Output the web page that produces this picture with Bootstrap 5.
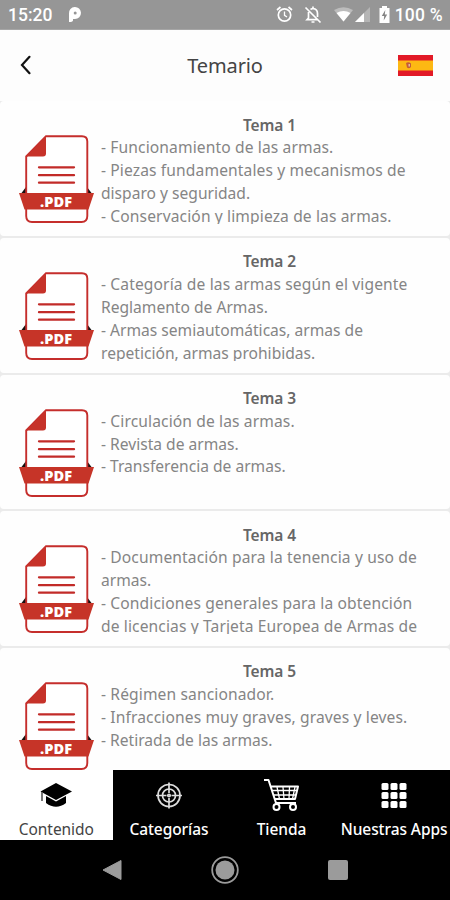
<!DOCTYPE html>
<html lang="es">
<head>
<meta charset="utf-8">
<meta name="viewport" content="width=device-width, initial-scale=1">
<title>Temario</title>
<link href="https://cdn.jsdelivr.net/npm/bootstrap@5.3.0/dist/css/bootstrap.min.css" rel="stylesheet">
<style>
body{font-family:"Noto Sans","Open Sans",sans-serif;background:#fdfdfd}
.screen{width:450px;height:900px}
.status{height:30px;background:#969696;color:#fff;font:500 17.5px Roboto,sans-serif;border-bottom:1px solid #a6a6a6}
.status svg,.topbar svg,.tab svg,.softkeys svg{display:block;flex:none}
.status-time{margin-left:8px}
.status-charge{margin:0 7px 0 5px;letter-spacing:.25px}
.topbar{height:71.3px;display:grid;grid-template-columns:80px 1fr 80px;padding:1px 17px 0}
.topbar svg{margin-top:-2px}
.topbar h1{font-size:20px;font-weight:400;color:#444;letter-spacing:-.1px}
.topics{height:668.7px;background:#ebebeb}
.topic{height:134.65px;margin-bottom:2px;padding:12.4px 14px 0 19px;background:#fefefe;border-radius:4px;flex:none}
.pdf-icon{width:75px;height:90px;margin:21.8px 7px 0 0;flex:none}
.topic-title{font-size:15.5px;font-weight:600;line-height:22.8px;color:#666;margin:0 -2px 0 0;letter-spacing:-.1px}
.topic-text{font-size:15.6px;line-height:22.8px;height:87.5px;color:#858585;white-space:nowrap}
.topic-text div{width:max-content}
.topic-text .loose{letter-spacing:.12px}
.tabs{height:70px;background:#000}
.tab{width:112.6px;height:70px;color:#fff;font-size:15.5px;font-weight:500;white-space:nowrap;letter-spacing:-.08px;flex:none}
.tab svg{margin-top:7px}
.tab span{line-height:22px;margin-top:5px}
.tab.current{background:#fff;color:#444;font-weight:400}
.softkeys{height:60px;background:#000}
</style>
<script src="https://cdn.jsdelivr.net/npm/bootstrap@5.3.0/dist/js/bootstrap.bundle.min.js"></script>
</head>
<body>
<svg width="0" height="0" class="position-absolute" aria-hidden="true">
<symbol id="pdf" viewBox="0 0 75 90">
<path d="M1 60 7 52V60zM74 60 68 52V60z" fill="#171010"/>
<path d="M27 1.200H63Q68.3 1.200 68.3 6.500V81Q68.300 87 62.500 87H13Q7.200 87 7.200 81V21.500z" fill="#fff" stroke="#c52e2c" stroke-width="1.900"/>
<path d="M27 1.500V18.500Q27 21.500 24 21.500H7z" fill="#c63229"/>
<path d="M20 32.300H55M20 40.200H55M20 47.700H55" stroke="#c22b28" stroke-width="2.300" stroke-linecap="round"/>
<path d="M0 58H75L69.500 74.500H5.500z" fill="#c63428"/>
<text x="21" y="71.500" font-family="Open Sans,sans-serif" font-weight="800" font-size="14.500" fill="#fff" textLength="32" lengthAdjust="spacingAndGlyphs">.PDF</text>
</symbol>
</svg>
<div class="screen d-flex flex-column overflow-hidden">
<div class="status d-flex align-items-center">
<span class="status-time">15:20</span>
<svg width="14" height="17" viewBox="0 0 14 17" style="margin-left:16px"><path d="M1 16V7.500A6 6 0 1 1 7 13H5V14.500Q4.500 16 1 16z" fill="#fff"/><circle cx="7.200" cy="7" r="1.500" fill="#969696"/></svg>
<svg class="ms-auto" width="17" height="17" viewBox="0 0 17 17" fill="none" stroke="#fff"><circle cx="8.500" cy="9" r="6.200" stroke-width="1.700"/><path d="M8.500 5.500V9.300L11 11" stroke-width="1.300"/><path d="M1 4 4.500 1M16 4 12.500 1" stroke-width="1.700"/></svg>
<svg width="18" height="18" viewBox="0 0 18 18" style="margin-left:11px" fill="none" stroke="#fff" stroke-width="1.700"><path d="M4.500 6V12L3 13.700H14M6.500 3.500Q8 2.500 9 2.500Q13.500 3 13.500 7.500V11M1.500 1.500 16.500 16.500M9 .5V3M7.500 16H10.500"/></svg>
<svg width="19" height="15" viewBox="0 0 19 15" style="margin-left:12px"><path d="M0 3Q9.500-2.500 19 3L9.500 14.500z" fill="#bcbcbc"/><path d="M2.500 6Q9.500 2 16.500 6L9.500 14.500z" fill="#fff"/></svg>
<svg width="15" height="15" viewBox="0 0 15 15" style="margin-left:2px"><path d="M15 0V15H0z" fill="#b5b5b5"/><path d="M9 6V15H0z" fill="#fff"/></svg>
<svg width="11" height="17" viewBox="0 0 11 17" style="margin-left:9px"><path d="M3 0H8V2H10.500V17H.5V2H3z" fill="#fff"/><path d="M6.300 4 2.800 10H5.200L4.700 14.500 8.200 8.500H5.800z" fill="#858585"/></svg>
<span class="status-charge">100 %</span>
</div>
<header class="topbar align-items-center">
<svg width="18" height="20" viewBox="0 0 18 20"><path d="M12.500 1.800 5 10 12.500 18.200" fill="none" stroke="#111" stroke-width="2.200" stroke-linecap="round"/></svg>
<h1 class="m-0 text-center">Temario</h1>
<svg class="ms-auto" width="35" height="21" viewBox="0 0 35 21"><path d="M0 0H35V21H0z" fill="#e21a27"/><path d="M0 5.500H35V15.500H0z" fill="#fdb813"/><path d="M8 8Q10.500 6.500 13 8.500V12Q11.500 14 9 12.500z" fill="#c45a3a"/><path d="M10.500 9H12V11.500H10.500z" fill="#e0b9a0"/></svg>
</header>
<main class="topics d-flex flex-column overflow-hidden">
<article class="topic d-flex"><svg class="pdf-icon"><use href="#pdf"/></svg><div class="flex-grow-1"><h2 class="topic-title text-center">Tema 1</h2><div class="topic-text overflow-hidden"><div class="loose">- Funcionamiento de las armas.</div><div class="loose">- Piezas fundamentales y mecanismos de</div><div>disparo y seguridad.</div><div class="loose">- Conservación y limpieza de las armas.</div></div></div></article>
<article class="topic d-flex"><svg class="pdf-icon"><use href="#pdf"/></svg><div class="flex-grow-1"><h2 class="topic-title text-center">Tema 2</h2><div class="topic-text overflow-hidden"><div class="loose">- Categoría de las armas según el vigente</div><div>Reglamento de Armas.</div><div>- Armas semiautomáticas, armas de</div><div>repetición, armas prohibidas.</div></div></div></article>
<article class="topic d-flex"><svg class="pdf-icon"><use href="#pdf"/></svg><div class="flex-grow-1"><h2 class="topic-title text-center">Tema 3</h2><div class="topic-text overflow-hidden"><div class="loose">- Circulación de las armas.</div><div>- Revista de armas.</div><div>- Transferencia de armas.</div></div></div></article>
<article class="topic d-flex"><svg class="pdf-icon"><use href="#pdf"/></svg><div class="flex-grow-1"><h2 class="topic-title text-center">Tema 4</h2><div class="topic-text overflow-hidden"><div class="loose">- Documentación para la tenencia y uso de</div><div>armas.</div><div class="loose">- Condiciones generales para la obtención</div><div class="loose">de licencias y Tarjeta Europea de Armas de</div></div></div></article>
<article class="topic d-flex"><svg class="pdf-icon"><use href="#pdf"/></svg><div class="flex-grow-1"><h2 class="topic-title text-center">Tema 5</h2><div class="topic-text overflow-hidden"><div class="loose">- Régimen sancionador.</div><div class="loose">- Infracciones muy graves, graves y leves.</div><div>- Retirada de las armas.</div></div></div></article>
</main>
<nav class="tabs d-flex">
<div class="tab current d-flex flex-column align-items-center"><svg width="36" height="36" viewBox="0 0 36 36"><path d="M18 6 34 14.500 18 23 2.500 14.500zM8 19 18 24.500 28 19V26Q18 33.500 8 26z" fill="#000"/><path d="M4 15V24" stroke="#555" stroke-width="1.600"/></svg><span>Contenido</span></div>
<div class="tab d-flex flex-column align-items-center"><svg width="36" height="36" viewBox="0 0 36 36" fill="none" stroke="#ddd" stroke-width="1.700"><circle cx="18" cy="18.500" r="11"/><circle cx="18" cy="18.500" r="6.500"/><path d="M18 5.500V16M18 21V31.500M5 18.500H15.500M20.500 18.500H31"/><circle cx="18" cy="18.500" r="1.200"/></svg><span>Categorías</span></div>
<div class="tab d-flex flex-column align-items-center"><svg width="38" height="36" viewBox="0 0 38 36" fill="none" stroke="#fff" stroke-width="2"><path d="M2 3H6.500L14 26H34M8.500 9.500H36L33 22H12.500" stroke-linejoin="round"/><path d="M10 13.500H35M11 18H34M15 10 17.500 22M21 10 22 22M27.500 10 27 22M33 10 30.500 22" stroke-width="1.300"/><circle cx="14.500" cy="30" r="3"/><circle cx="31" cy="30" r="3"/></svg><span>Tienda</span></div>
<div class="tab d-flex flex-column align-items-center"><svg width="36" height="36" viewBox="0 0 36 36" fill="#fff"><g id="dots"><rect x="5.500" y="6" width="7" height="7" rx="1.500"/><rect x="14.500" y="6" width="7" height="7" rx="1.500"/><rect x="23.500" y="6" width="7" height="7" rx="1.500"/></g><use href="#dots" y="9"/><use href="#dots" y="18"/></svg><span>Nuestras Apps</span></div>
</nav>
<div class="softkeys d-flex justify-content-center align-items-center">
<svg width="20" height="22" viewBox="0 0 20 22"><path d="M19 1.500V20.500L1 11z" fill="#9b9b9b" stroke="#9b9b9b" stroke-linejoin="round"/></svg>
<svg width="28" height="28" viewBox="0 0 28 28" style="margin:0 89px"><circle cx="14" cy="14" r="12.800" fill="none" stroke="#9b9b9b" stroke-width="1.800"/><circle cx="14" cy="14" r="9.500" fill="#9b9b9b"/></svg>
<svg width="20" height="20" viewBox="0 0 20 20"><rect width="20" height="20" rx="2" fill="#9b9b9b"/></svg>
</div>
</div>
</body>
</html>
